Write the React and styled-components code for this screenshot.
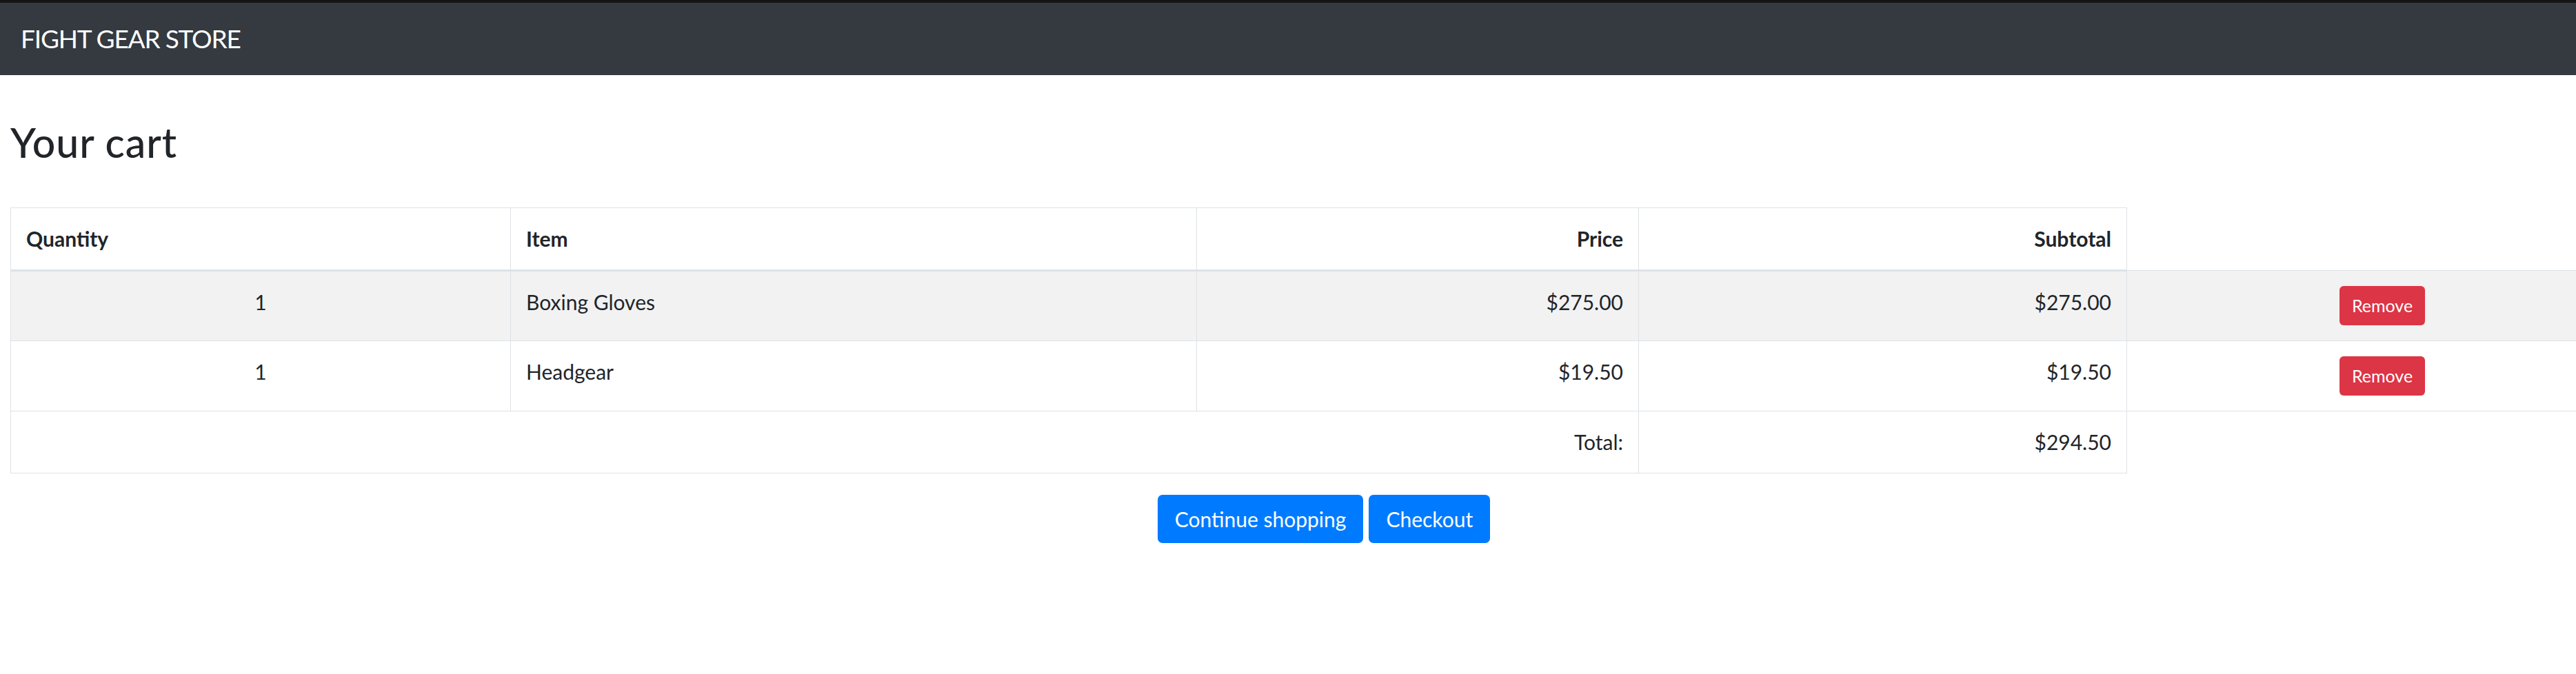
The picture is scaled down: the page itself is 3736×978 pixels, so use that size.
import React from "react";
import styled, { createGlobalStyle } from "styled-components";

const items = [
  { qty: 1, name: "Boxing Gloves", price: 275 },
  { qty: 1, name: "Headgear", price: 19.5 },
];

const money = n => "$" + n.toFixed(2);

const App = () => {
  const total = items.reduce((sum, it) => sum + it.qty * it.price, 0);
  return (
    <>
      <GlobalStyle />
      <Navbar>
        <Brand>FIGHT GEAR STORE</Brand>
      </Navbar>
      <Main>
        <Title>Your cart</Title>
        <Table>
          <colgroup>
            <col style={{ width: 725 }} />
            <col style={{ width: 995 }} />
            <col style={{ width: 641 }} />
            <col style={{ width: 708 }} />
            <col style={{ width: 741 }} />
          </colgroup>
          <thead>
            <tr>
              <Th>Quantity</Th>
              <Th>Item</Th>
              <Th $align="right">Price</Th>
              <Th $align="right">Subtotal</Th>
            </tr>
          </thead>
          <tbody>
            {items.map((it, idx) => (
              <Row key={idx} $striped={idx % 2 === 0}>
                <Td $align="center">{it.qty}</Td>
                <Td>{it.name}</Td>
                <Td $align="right">{money(it.price)}</Td>
                <Td $align="right">{money(it.qty * it.price)}</Td>
                <Td $align="center">
                  <RemoveButton>Remove</RemoveButton>
                </Td>
              </Row>
            ))}
            <Row>
              <Td colSpan={3} $align="right">
                Total:
              </Td>
              <Td $align="right">{money(total)}</Td>
            </Row>
          </tbody>
        </Table>
        <Actions>
          <Button>Continue shopping</Button>
          <Button>Checkout</Button>
        </Actions>
      </Main>
    </>
  );
};

export default App;

const GlobalStyle = createGlobalStyle`
  html {
    overflow-x: hidden;
  }
  body {
    margin: 0;
    background: #fff;
    color: #212529;
    font-family: Lato, "Open Sans", sans-serif;
    font-size: 30px;
    line-height: 1.5;
  }
`;

const Navbar = styled.nav`
  display: flex;
  align-items: center;
  height: 105px;
  padding: 0 30px;
  background: #343a40;
  border-top: 4px solid #141414;
`;

const Brand = styled.div`
  color: #fff;
  font-size: 37px;
  line-height: 1.2;
  letter-spacing: -1.2px;
  white-space: nowrap;
`;

const Main = styled.main`
  width: 3810px;
  padding: 0 15px;
`;

const Title = styled.h1`
  margin: 63px 0 58px;
  font-size: 59px;
  font-weight: 500;
  line-height: 1.2;
  letter-spacing: 1px;
`;

const Table = styled.table`
  width: 3810px;
  table-layout: fixed;
  border-collapse: collapse;
`;

const Th = styled.th`
  padding: 22px;
  border: 1px solid #dee2e6;
  border-bottom: 3px solid #dee2e6;
  text-align: ${props => props.$align || "left"};
  vertical-align: bottom;
  font-weight: 700;
  white-space: nowrap;
`;

const Row = styled.tr`
  background: ${props => (props.$striped ? "#f2f2f2" : "transparent")};
`;

const Td = styled.td`
  padding: 22px;
  border: 1px solid #dee2e6;
  text-align: ${props => props.$align || "left"};
  vertical-align: top;
  white-space: nowrap;
`;

const RemoveButton = styled.button`
  display: inline-flex;
  align-items: center;
  vertical-align: top;
  height: 57px;
  padding: 0 18px;
  border: none;
  border-radius: 6px;
  background: #dc3545;
  color: #fff;
  font-family: inherit;
  font-size: 25px;
`;

const Actions = styled.div`
  display: flex;
  justify-content: center;
  gap: 8px;
  margin-top: 31px;
`;

const Button = styled.button`
  height: 70px;
  padding: 0 25px;
  border: none;
  border-radius: 7px;
  background: #007bff;
  color: #fff;
  font-family: inherit;
  font-size: 30px;
`;
